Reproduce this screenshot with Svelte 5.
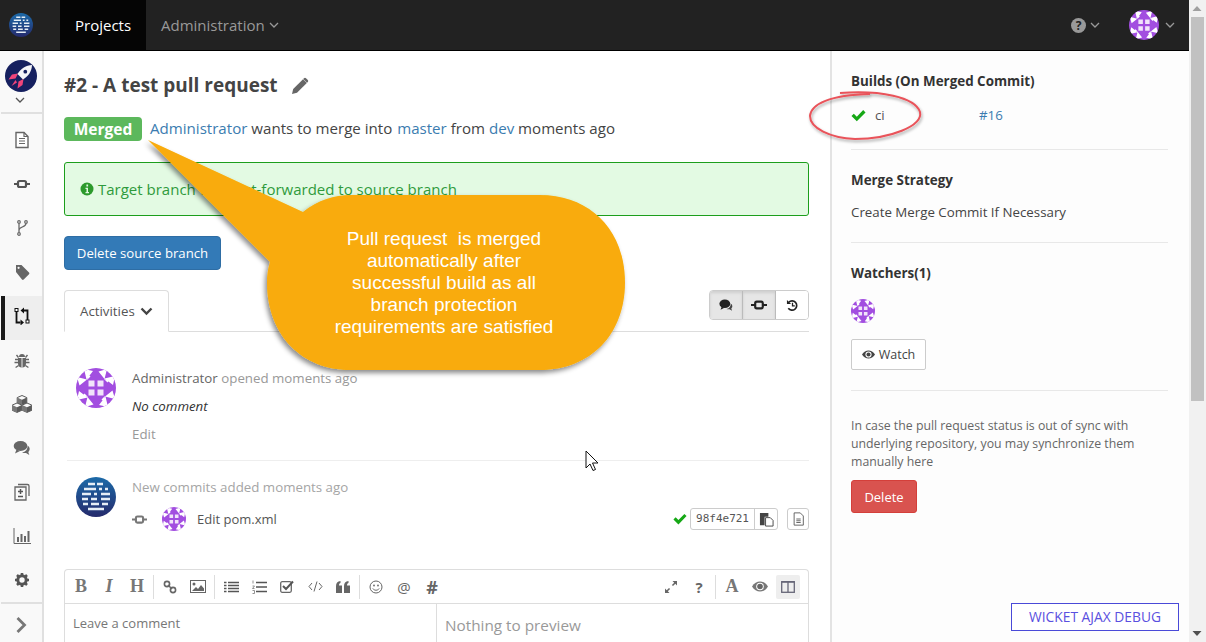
<script>
  const navIcons = ['file','commit','branch','tag','pr','bug','cubes','chat','diff','chart','gear'];
  const rotations = [0, 90, 180, 270];
  const cubes = [[10, .5], [5, 8], [15, 8]];
</script>

{#snippet ident(size)}
  <svg width={size} height={size} viewBox="0 0 40 40" class="block">
    <circle cx="20" cy="20" r="20" fill="#a24ee0"/>
    <clipPath id="idc"><circle cx="20" cy="20" r="20"/></clipPath>
    <g clip-path="url(#idc)">
      {#each rotations as r}
        <g transform="rotate({r} 20 20)">
          <path d="M8 1L17 3L10.500 11.500ZM1 9L3.500 17.500L11 11.500ZM0 0H6L0 7Z" fill="#fff"/>
          <path d="M12 6.500L14.500 8.500L11 12Z" fill="#fff"/>
        </g>
      {/each}
    </g>
    <path d="M12.500 12.500h6v6h-6zM21.500 12.500h6v6h-6zM12.500 21.500h6v6h-6zM21.500 21.500h6v6h-6z" fill="#f1e4fa"/>
  </svg>
{/snippet}

{#snippet logo(size)}
  <svg width={size} height={size} viewBox="0 0 40 40" class="block">
    <defs><linearGradient id="lg" x1="0" y1="0" x2="0" y2="1"><stop offset="0" stop-color="#1c6aa8"/><stop offset="1" stop-color="#252a6c"/></linearGradient></defs>
    <circle cx="20" cy="20" r="20" fill="url(#lg)"/>
    <path d="M12 7h7M21 7h6M8 12h12M23 12h3M29 12h3M6 17h9M18 17h3M25 17h9M6 22h6M15 22h6M25 22h9M7 27h5M15 27h8M26 27h6M12 32h16" stroke="#e6eef6" stroke-width="2.400" fill="none"/>
  </svg>
{/snippet}

{#snippet commitIcon(size, color)}
  <svg width={size} height={size} viewBox="0 0 16 16" class="block">
    <path d="M0 8h4M12 8h4" stroke={color} stroke-width="2"/>
    <rect x="4.200" y="4.700" width="7.600" height="6.600" rx="1.500" fill="none" stroke={color} stroke-width="2.200"/>
  </svg>
{/snippet}

{#snippet check(w)}
  <svg width={w} height={w} viewBox="0 0 16 16" class="block"><path d="M.5 8.500L3 6l3.200 3.200L13 2.200 15.500 4.700 6.200 14.200z" fill="#16a816"/></svg>
{/snippet}

{#snippet chev(color, w = 10)}
  <svg width={w} height="6" viewBox="0 0 10 6" class="block"><path d="M1 1l4 4 4-4" fill="none" stroke={color} stroke-width="1.300"/></svg>
{/snippet}

{#snippet sideIcon(n)}
  <svg width="20" height="18" viewBox="0 0 20 18" class="block">
    {#if n==='file'}
      <path d="M4 1.500h8l4 4v11H4z" fill="#fff" stroke="#666" stroke-width="1.400"/><path d="M7 7.500h6M7 10h6M7 12.500h6M12 1.500v4h4" stroke="#666" stroke-width="1.200" fill="none"/>
    {:else if n==='commit'}
      <path d="M2 9h4M14 9h4" stroke="#555" stroke-width="2"/><rect x="6" y="6" width="8" height="6" rx="1.500" fill="none" stroke="#555" stroke-width="2.200"/>
    {:else if n==='branch'}
      <circle cx="7" cy="3" r="1.300" fill="none" stroke="#666" stroke-width="1.200"/><circle cx="14" cy="3" r="1.300" fill="none" stroke="#666" stroke-width="1.200"/><circle cx="7" cy="15" r="1.300" fill="none" stroke="#666" stroke-width="1.200"/><path d="M7 4.500v9M14 4.500c0 3.500-7 3.500-7 6.500" fill="none" stroke="#666" stroke-width="1.300"/>
    {:else if n==='tag'}
      <path d="M4 2h5.500l7.500 7.500a1.200 1.200 0 0 1 0 1.700l-5.300 5.300a1.200 1.200 0 0 1-1.700 0L4 9z" fill="#666"/><circle cx="6.600" cy="4.800" r="1.100" fill="#f9f9f9"/>
    {:else if n==='pr'}
      <rect x="3" y="1.500" width="3" height="3" fill="#fff" stroke="#111" stroke-width="1"/><rect x="14" y="13" width="3" height="3" fill="#fff" stroke="#111" stroke-width="1"/><path d="M4.500 4.500v11h4M15.500 13V3.500h-4" fill="none" stroke="#111" stroke-width="1.800"/><path d="M12 .5v6L8.500 3.500zM8.500 12.500v6l3.500-3z" fill="#111"/>
    {:else if n==='bug'}
      <path d="M6 7h8v5.500a4 4 0 0 1-8 0zM7 6a3 3 0 0 1 6 0z" fill="#666"/><path d="M6 8.500H3M6 11.500H2.500M6.600 14.500l-3 2M14 8.500h3M14 11.500h3.500M13.400 14.500l3 2M6.500 6.500L4.500 4M13.500 6.500L15.500 4" stroke="#666" stroke-width="1.400" fill="none"/><path d="M10 7v9.500" stroke="#f9f9f9" stroke-width=".9"/>
    {:else if n==='cubes'}
      {#each cubes as c}
        <g transform="translate({c[0]} {c[1]})">
          <path d="M0 0l4.800 2.100v5.200L0 9.400l-4.800-2.100V2.100z" fill="#fafafa" stroke="#5a5a5a" stroke-width="1"/>
          <path d="M0 4.200l4.800-2.100v5.200L0 9.400z" fill="#5a5a5a"/>
          <path d="M0 4.200L-4.800 2.100v5.200L0 9.400z" fill="#777"/>
        </g>
      {/each}
    {:else if n==='chat'}
      <ellipse cx="8.500" cy="7" rx="6.800" ry="5" fill="#666"/><path d="M4.500 10.500L3 14.500l5-2.500z" fill="#666"/><path d="M15.500 6.500c2.500 1.500 3 4.500.8 6.500l1 3-3.300-2c-1.500.3-3 0-4-.5 3.500-.3 6-3.500 5.500-7z" fill="#666"/>
    {:else if n==='diff'}
      <path d="M3 4h11v13H3zM6 1.500h9.500a1.500 1.500 0 0 1 1.500 1.500v10" fill="none" stroke="#666" stroke-width="1.300"/><path d="M8.500 6v5M6 8.500h5M6 13.500h5" stroke="#555" stroke-width="1.500"/>
    {:else if n==='chart'}
      <path d="M2 1v15.500h17" fill="none" stroke="#666" stroke-width="1"/><path d="M5 10h2v5H5zM8.500 7h2v8h-2zM12 9h2v6h-2zM15.500 4h2v11h-2z" fill="#666"/>
    {:else if n==='gear'}
      <circle cx="10" cy="9" r="4.200" fill="none" stroke="#555" stroke-width="3"/><path d="M10 2v2.500M10 13.500V16M3 9h2.500M14.500 9H17M5 4l1.800 1.800M13.200 12.200L15 14M5 14l1.800-1.800M13.200 5.800L15 4" stroke="#555" stroke-width="2.600"/>
    {/if}
  </svg>
{/snippet}

<div class="page">
  <div class="window">
    <header class="topbar">
      <div class="brand">{@render logo(24)}</div>
      <div class="tab active">Projects</div>
      <div class="tab">Administration {@render chev('#999')}</div>
      <div class="spacer"></div>
      <div class="help">
        <span class="qcircle">?</span>
        {@render chev('#999')}
      </div>
      <div class="me">{@render ident(30)}{@render chev('#999')}</div>
    </header>

    <div class="body">
      <nav class="side">
        <div class="proj">
          <svg width="32" height="32" viewBox="0 0 32 32" class="block">
            <circle cx="16" cy="16" r="16" fill="#16205f"/>
            <path d="M13 13.500L7 14.500 3.500 19.500 10.500 18.500zM18.500 19L17.500 25 12.500 28.500 13.500 21.500z" fill="#f0447a"/>
            <path d="M10.500 20L6.500 26 12 22.500z" fill="#f0447a"/>
            <path d="M27 5c-6 .2-11 3.200-14.500 9L18 19.500c5.800-3.500 8.800-8.500 9-14.500z" fill="#f4f4f8"/>
            <circle cx="20.300" cy="11.700" r="1.900" fill="#16205f"/>
          </svg>
          <div class="projchev">{@render chev('#555')}</div>
        </div>
        <div class="items">
          {#each navIcons as n}
            <div class="item" class:on={n === 'pr'}><span class="iconbox">{@render sideIcon(n)}</span></div>
          {/each}
        </div>
        <div class="collapse">
          <svg width="12" height="18" viewBox="0 0 12 18" class="block"><path d="M2.500 2l7 7-7 7" fill="none" stroke="#777" stroke-width="2.800"/></svg>
        </div>
      </nav>

      <main class="main">
        <h1 class="title">#2 - A test pull request
          <svg width="18" height="18" viewBox="0 0 18 18" class="block"><path d="M1 17l1.200-5L12 2.200 15.800 6 6 15.800z" fill="#666"/><path d="M13 1.200a1.500 1.500 0 0 1 2 0l1.800 1.800a1.500 1.500 0 0 1 0 2l-.8.800L12.200 2z" fill="#666"/></svg>
        </h1>
        <div class="status">
          <span class="badge">Merged</span>
          <span class="statustext"><a href="#a">Administrator</a> wants to merge into <a href="#a" class="gapped">master</a> from <a href="#a">dev</a> moments ago</span>
        </div>
        <div class="alert">
          <svg width="14" height="14" viewBox="0 0 14 14" class="block"><circle cx="7" cy="7" r="6.500" fill="#2c9a2c"/><path d="M5.500 5.800h2.500v4.200h1v1.200H5.500V10h1V7H5.500zM6.400 2.600h1.700v1.800H6.400z" fill="#e3fae3"/></svg>
          Target branch was fast-forwarded to source branch
        </div>
        <button class="del">Delete source branch</button>

        <div class="tabsrow">
          <div class="acttab">Activities
            <svg width="13" height="9" viewBox="0 0 13 9" class="block"><path d="M1.500 1.500l5 5 5-5" fill="none" stroke="#444" stroke-width="2.400"/></svg>
          </div>
          <div class="group">
            <span class="gb pressed"><svg width="14" height="14" viewBox="0 0 18 18" class="block"><ellipse cx="7.500" cy="7.500" rx="7" ry="5.500" fill="#222"/><path d="M3.500 11L2 15l5-2.500z" fill="#222"/><path d="M15 7c2.500 1.500 3 4.500.8 6.500l1 3-3.300-2c-1.500.3-3 0-4-.5 3.500-.3 6-3.500 5.500-7z" fill="#444"/></svg></span>
            <span class="gb pressed">{@render commitIcon(16,'#222')}</span>
            <span class="gb"><svg width="13" height="13" viewBox="0 0 14 14" class="block"><path d="M3 3.500A5 5 0 1 1 2.500 10" fill="none" stroke="#222" stroke-width="1.800"/><path d="M1 1v4.500h4.500z" fill="#222"/><path d="M7 4v3.500h2.500" fill="none" stroke="#222" stroke-width="1.400"/></svg></span>
          </div>
        </div>

        <section class="act first">
          <div class="av">{@render ident(40)}</div>
          <div class="actbody">
            <div class="line"><span class="dark">Administrator</span> opened moments ago</div>
            <div class="em">No comment</div>
            <div class="line">Edit</div>
          </div>
        </section>
        <section class="act second">
          <div class="av">{@render logo(40)}</div>
          <div class="actbody">
            <div class="line light">New commits added moments ago</div>
            <div class="commit">
              <span class="cicon">{@render commitIcon(15,'#777')}</span>
              <span class="cav">{@render ident(24)}</span>
              <span class="cmsg">Edit pom.xml</span>
              <span class="spacer"></span>
              {@render check(14)}
              <span class="hash"><span class="hashtext">98f4e721</span><span class="hashbtn"><svg width="15" height="15" viewBox="0 0 16 16" class="block"><path d="M1 1h9v4H6v9H1z" fill="#444"/><path d="M7 6h5l3 3v6H7z" fill="#fff" stroke="#444" stroke-width="1"/></svg></span></span>
              <span class="filebtn"><svg width="13" height="14" viewBox="0 0 14 16" class="block"><path d="M2 1h7l3.500 3.500V15H2z" fill="none" stroke="#555"/><path d="M4.500 8h5M4.500 10h5M4.500 12h5" stroke="#555"/></svg></span>
            </div>
          </div>
        </section>

        <div class="editor">
          <div class="tools">
            <span class="t serif">B</span><span class="t serif it">I</span><span class="t serif">H</span>
            <span class="sep"></span>
            <span class="t"><svg width="14" height="14" viewBox="0 0 14 14"><circle cx="4" cy="4" r="2.600" fill="none" stroke="#666" stroke-width="1.600"/><circle cx="10" cy="10" r="2.600" fill="none" stroke="#666" stroke-width="1.600"/><path d="M5 5l4 4" stroke="#666" stroke-width="1.600"/></svg></span>
            <span class="t"><svg width="16" height="13" viewBox="0 0 16 13"><rect x=".5" y=".5" width="15" height="12" fill="none" stroke="#666"/><circle cx="4" cy="4" r="1.500" fill="#666"/><path d="M2 11l4-4 2 2 3-4 3 3.500V11z" fill="#666"/></svg></span>
            <span class="sep"></span>
            <span class="t"><svg width="15" height="12" viewBox="0 0 15 12"><path d="M0 1.500h2.500M4 1.500h11M0 4.500h2.500M4 4.500h11M0 7.500h2.500M4 7.500h11M0 10.500h2.500M4 10.500h11" stroke="#555" stroke-width="1.700"/></svg></span>
            <span class="t"><svg width="15" height="14" viewBox="0 0 15 14"><path d="M4 2.500h11M4 7h11M4 11.500h11" stroke="#555" stroke-width="1.700"/><path d="M1 .5v3M.5 6h2l-2 2.500h2M.5 10.500h2v3h-2" stroke="#777" stroke-width=".8" fill="none"/></svg></span>
            <span class="t"><svg width="14" height="13" viewBox="0 0 14 13"><rect x=".7" y="1.700" width="10.600" height="10.600" rx="1.500" fill="none" stroke="#666" stroke-width="1.300"/><path d="M3 6l3 3 7-7.500" fill="none" stroke="#555" stroke-width="2"/></svg></span>
            <span class="t"><svg width="15" height="11" viewBox="0 0 15 11"><path d="M4 2L1 5.500 4 9M11 2l3 3.500L11 9M9 .5l-3 10" fill="none" stroke="#666" stroke-width="1"/></svg></span>
            <span class="t"><svg width="14" height="12" viewBox="0 0 14 12"><path d="M0 5c0-3 1.500-4.500 4.500-5v2C3.500 2.300 3 3 3 4.500h3V12H0zM8 5c0-3 1.500-4.500 4.500-5v2c-1 .3-1.500 1-1.500 2.500h3V12H8z" fill="#666"/></svg></span>
            <span class="sep"></span>
            <span class="t"><svg width="14" height="14" viewBox="0 0 14 14"><circle cx="7" cy="7" r="6" fill="none" stroke="#666" stroke-width="1"/><circle cx="5" cy="5.500" r=".9" fill="#666"/><circle cx="9" cy="5.500" r=".9" fill="#666"/><path d="M3.800 8.500c1.500 2.300 4.900 2.300 6.400 0" fill="none" stroke="#666"/></svg></span>
            <span class="t at">@</span>
            <span class="t hashm">#</span>
            <span class="spacer"></span>
            <span class="t"><svg width="14" height="14" viewBox="0 0 14 14"><path d="M8.500 1H13v4.500l-1.700-1.700-2.300 2.300L7.900 5l2.300-2.300zM1 13V8.500l1.700 1.700L5 7.900 6.100 9l-2.300 2.300L5.500 13z" fill="#666"/></svg></span>
            <span class="t qm">?</span>
            <span class="sep"></span>
            <span class="t serif big">A</span>
            <span class="t"><svg width="16" height="11" viewBox="0 0 16 11"><path d="M0 5.500C2 2 5 .5 8 .5s6 1.500 8 5c-2 3.500-5 5-8 5s-6-1.500-8-5z" fill="#777"/><circle cx="8" cy="5.500" r="3.800" fill="#fff"/><circle cx="8" cy="5.500" r="2.800" fill="#666"/></svg></span>
            <span class="t split"><svg width="14" height="12" viewBox="0 0 14 12"><rect x=".7" y=".7" width="12.600" height="10.600" fill="none" stroke="#667" stroke-width="1.300"/><path d="M7 1v10" stroke="#667" stroke-width="1.300"/><path d="M.7 .7h12.600" stroke="#667" stroke-width="2"/></svg></span>
          </div>
          <div class="panes">
            <div class="pane left">Leave a comment</div>
            <div class="pane right">Nothing to preview</div>
          </div>
        </div>
      </main>

      <aside class="aside">
        <section class="block1">
          <h3>Builds (On Merged Commit)</h3>
          <div class="build">
            <span class="bcheck">{@render check(15)}</span>
            <span class="bname">ci</span>
            <a href="#a" class="bnum">#16</a>
          </div>
        </section>
        <section class="block2">
          <h3>Merge Strategy</h3>
          <p>Create Merge Commit If Necessary</p>
        </section>
        <section class="block3">
          <h3>Watchers(1)</h3>
          <div class="wav">{@render ident(24)}</div>
          <button class="watch"><svg width="13" height="9" viewBox="0 0 16 11"><path d="M0 5.500C2 2 5 .5 8 .5s6 1.500 8 5c-2 3.500-5 5-8 5s-6-1.500-8-5z" fill="#444"/><circle cx="8" cy="5.500" r="3.800" fill="#fff"/><circle cx="8" cy="5.500" r="2.500" fill="#444"/></svg> Watch</button>
        </section>
        <section class="block4">
          <p class="note">In case the pull request status is out of sync with underlying repository, you may synchronize them manually here</p>
          <button class="delete">Delete</button>
        </section>
      </aside>
    </div>
  </div>

  <div class="scroll">
    <svg width="16" height="17" viewBox="0 0 16 17" class="block"><path d="M8 6l4.500 5h-9z" fill="#a0a0a0"/></svg>
    <div class="thumb"></div>
    <div class="spacer"></div>
    <svg width="16" height="17" viewBox="0 0 16 17" class="block"><path d="M8 11L3.500 6h9z" fill="#505050"/></svg>
  </div>

  <!-- annotations lying over the page -->
  <svg class="overlay" width="1206" height="642" viewBox="0 0 1206 642">
    <defs>
      <filter id="sh" x="-10%" y="-10%" width="120%" height="120%"><feDropShadow dx="-2" dy="3" stdDeviation="2.500" flood-color="#000" flood-opacity=".45"/></filter>
      <filter id="sh2" x="-10%" y="-20%" width="120%" height="140%"><feDropShadow dx="1" dy="2" stdDeviation="1.500" flood-color="#000" flood-opacity=".35"/></filter>
    </defs>
    <path d="M148 140L303 212C318 200 335 195 350 195H540C590 195 625 230 625 282.500C625 335 590 370 540 370H350C302 370 267 335 267 282.500C267 275 268 268 270 262Z" fill="#f9ab08" filter="url(#sh)"/>
    <path d="M840 93C880 90 915 97 920 112C923 126 890 139 855 139C830 138 810 128 810 116C811 104 830 95 870 94" fill="none" stroke="#e9535a" stroke-width="2" filter="url(#sh2)"/>
    <path d="M586 451v17l4-4 3 6.500 2.500-1-3-6.500h5.500z" fill="#fff" stroke="#111" stroke-width="1"/>
  </svg>
  <div class="bubble">Pull request&nbsp; is merged<br>automatically after<br>successful build as all<br>branch protection<br>requirements are satisfied</div>
  <div class="wicket">WICKET AJAX DEBUG</div>
</div>

<style>
  :global(body) { margin: 0; background: #fff; }
  :global(html), :global(body) { overflow: hidden; }
  .block { display: block; }
  .page { display: flex; width: 1206px; height: 642px; overflow: hidden; position: relative; font-family: "Open Sans", sans-serif; color: #444; font-size: 13.300px; }
  .window { flex: 1; min-width: 0; display: flex; flex-direction: column; }
  .spacer { flex: 1; }
  a { color: #3b7cb0; text-decoration: none; }

  .scroll { width: 17px; flex: none; background: #f1f1f1; display: flex; flex-direction: column; box-sizing: border-box; }
  .thumb { height: 384px; width: 13px; margin: 0 2px; background: #c1c1c1; }

  .topbar { height: 50px; flex: none; background: #222; border-bottom: 1px solid #000; display: flex; align-items: stretch; color: #999; font-size: 15px; }
  .brand { width: 60px; box-sizing: border-box; padding-left: 9px; display: flex; align-items: center; }
  .tab { padding: 0 15px; display: flex; align-items: center; gap: 4px; }
  .tab.active { width: 86px; box-sizing: border-box; background: #050505; color: #fff; }
  .help { display: flex; align-items: center; gap: 4px; margin-right: 29px; }
  .qcircle { width: 15px; height: 15px; border-radius: 50%; background: #999; color: #222; font-size: 12px; font-weight: 700; line-height: 15px; text-align: center; }
  .me { display: flex; align-items: center; gap: 6px; margin-right: 14px; }

  .body { flex: 1; min-height: 0; display: flex; }

  .side { width: 44px; flex: none; box-sizing: border-box; background: #f9f9f9; border-right: 2px solid #e0e0e0; display: flex; flex-direction: column; }
  .proj { height: 63px; flex: none; box-sizing: border-box; padding: 9px 0 0 4px; border-bottom: 2px solid #e0e0e0; margin-left: 1px; }
  .projchev { margin: 5px 0 0 10px; }
  .items { display: flex; flex-direction: column; flex: none; padding-top: 6px; }
  .item { height: 44px; display: flex; justify-content: center; box-sizing: border-box; margin-left: 1px; border-left: 4px solid transparent; padding-right: 4px; padding-top: 11px; }
  .iconbox { display: block; height: 18px; }
  .item.on { background: #eee; border-left-color: #1a1a1a; }
  .collapse { border-top: 2px solid #e0e0e0; margin-top: -2px; margin-left: 1px; flex: 1; display: flex; justify-content: center; padding-top: 12px; padding-right: 2px; }

  .main { flex: 1; min-width: 0; box-sizing: border-box; padding: 0 21px 0 20px; background: #fff; }
  .title { margin: 21px 0 0; font-size: 19px; line-height: 27px; font-weight: 700; color: #444; display: flex; align-items: center; gap: 13px; }
  .status { display: flex; align-items: flex-start; gap: 8px; margin-top: 18px; font-size: 15.100px; line-height: 22px; height: 24px; }
  .badge { background: #5cb85c; color: #fff; font-weight: 700; font-size: 15.500px; line-height: 24px; height: 24px; width: 78px; text-align: center; border-radius: 4px; }
  .statustext { display: block; }
  .gapped { margin-left: 1px; }
  .alert { margin-top: 21px; height: 54px; box-sizing: border-box; border: 1px solid #1c9e1c; border-radius: 3px; background: #e3fae3; color: #2f9a3c; font-size: 15px; display: flex; align-items: center; padding-left: 15px; gap: 4px; }
  .del { display: block; margin-top: 20px; width: 157px; height: 34px; background: #337ab7; border: 1px solid #2e6da4; border-radius: 4px; color: #fff; font: 13.200px "Open Sans", sans-serif; padding: 0; }

  .tabsrow { margin-top: 20px; height: 42px; box-sizing: border-box; border-bottom: 1px solid #ddd; display: flex; justify-content: space-between; align-items: flex-start; }
  .acttab { width: 105px; height: 42px; box-sizing: border-box; border: 1px solid #ddd; border-bottom-color: #fff; border-radius: 4px 4px 0 0; background: #fff; display: flex; align-items: center; padding-left: 15px; gap: 5px; color: #555; }
  .group { display: flex; height: 30px; border: 1px solid #ccc; border-radius: 4px; box-sizing: border-box; width: 100px; overflow: hidden; }
  .gb { flex: 1; display: flex; align-items: center; justify-content: center; border-right: 1px solid #bbb; }
  .gb:last-child { border-right: 0; background: #fff; }
  .pressed { background: #e6e6e6; box-shadow: inset 0 2px 3px rgba(0,0,0,.1); }

  .act { display: flex; margin-left: 3px; padding-left: 9px; gap: 16px; }
  .av { flex: none; }
  .actbody { flex: 1; min-width: 0; color: #999; line-height: 18px; }
  .first { padding-top: 36px; height: 129px; box-sizing: border-box; border-bottom: 1px solid #eee; }
  .first .actbody { margin-top: 1px; }
  .dark { color: #666; }
  .em { font-style: italic; color: #333; margin: 10px 0; }
  .second { padding-top: 16px; }
  .second .actbody { margin-top: 1px; }
  .light { color: #a5a5a5; }
  .commit { display: flex; align-items: center; height: 24px; margin-top: 11px; }
  .cicon { width: 30px; }
  .cmsg { margin-left: 11px; color: #555; font-size: 13px; }
  .hash { display: flex; height: 22px; box-sizing: border-box; border: 1px solid #ccc; border-radius: 3px; margin-left: 3px; font: 11px/20px "DejaVu Sans Mono", monospace; color: #555; }
  .hashtext { padding: 0 5px; }
  .hashbtn { width: 22px; border-left: 1px solid #ccc; display: flex; align-items: center; justify-content: center; }
  .filebtn { margin-left: 9px; width: 22px; height: 22px; box-sizing: border-box; border: 1px solid #ccc; border-radius: 3px; display: flex; align-items: center; justify-content: center; }

  .editor { margin-top: 38px; border: 1px solid #ddd; border-radius: 4px 4px 0 0; border-bottom: 0; }
  .tools { height: 34px; box-sizing: border-box; border-bottom: 1px solid #ddd; display: flex; align-items: center; padding: 0 8px 0 2px; color: #666; }
  .t { display: flex; align-items: center; justify-content: center; width: 28px; height: 24px; flex: none; }
  .serif { font: 700 18px "Liberation Serif", serif; color: #777; }
  .it { font-style: italic; }
  .at { font-size: 15px; }
  .hashm { font-size: 18px; font-weight: 700; }
  .qm { font-weight: 700; font-size: 15px; }
  .sep { width: 1px; height: 24px; background: #ddd; margin: 0 2px; flex: none; }
  .split { background: #eee; border-radius: 2px; width: 24px; margin-left: 2px; }
  .panes { display: flex; height: 60px; }
  .pane { box-sizing: border-box; padding: 10px 8px; }
  .left { width: 372px; color: #777; border-right: 1px solid #ddd; font-size: 13px; }
  .right { flex: 1; color: #999; font-size: 15.300px; padding-top: 11px; }

  .aside { width: 359px; flex: none; box-sizing: border-box; border-left: 2px solid #e3e3e3; background: #fdfdfd; padding: 0 21px 0 19px; color: #444; }
  .aside section { border-bottom: 1px solid #e8e8e8; }
  .aside h3 { margin: 0; font-size: 13.400px; font-weight: 700; line-height: 18px; color: #333; }
  .aside p { margin: 0; }
  .block1 { height: 99px; padding-top: 21px; box-sizing: border-box; }
  .build { display: flex; align-items: center; margin-top: 16px; height: 18px; }
  .bcheck { width: 24px; }
  .bname { width: 104px; color: #555; }
  .block2 { height: 93px; padding-top: 21px; box-sizing: border-box; }
  .block2 p { margin-top: 14px; line-height: 18px; }
  .block3 { height: 148px; padding-top: 21px; box-sizing: border-box; }
  .wav { margin-top: 17px; }
  .watch { display: flex; align-items: center; gap: 4px; margin-top: 16px; width: 75px; height: 31px; justify-content: center; background: #fff; border: 1px solid #ccc; border-radius: 2px; font: 12.500px "Open Sans", sans-serif; color: #444; padding: 0; }
  .block4 { border-bottom: 0 !important; padding-top: 26px; }
  .note { font-size: 12.300px; line-height: 18px; color: #666; }
  .delete { display: block; margin-top: 9px; width: 66px; height: 33px; background: #d9534f; border: 1px solid #d43f3a; border-radius: 3px; color: #fff; font: 13px "Open Sans", sans-serif; padding: 0; }

  .overlay { position: absolute; left: 0; top: 0; pointer-events: none; }
  .bubble { position: absolute; left: 267px; top: 228px; width: 354px; text-align: center; color: #fff; font: 19px/22px "Liberation Sans", sans-serif; }
  .wicket { position: absolute; left: 1011px; top: 603px; width: 168px; height: 28px; box-sizing: border-box; border: 1px solid #4a4ad8; background: #fff; color: #5a50e0; font: 13.800px/26px "Open Sans", sans-serif; text-align: center; }
</style>
